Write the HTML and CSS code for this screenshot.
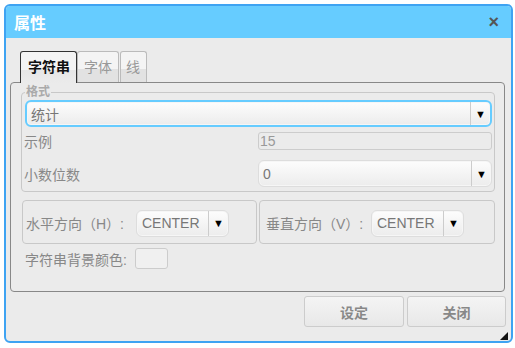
FILE: index.html
```html
<!DOCTYPE html>
<html>
<head>
  <title>属性</title>
  <link rel="stylesheet" href="styles.css">
</head>
<body>
  <div class="dialog">
    <div class="dialog-head">
      <span class="dialog-title">属性</span>
      <span class="dialog-close">×</span>
    </div>

    <div class="dialog-body">
      <div class="tabs">
        <div class="tab active">字符串</div>
        <div class="tab">字体</div>
        <div class="tab">线</div>
      </div>

      <div class="panel">
        <fieldset class="format">
          <legend>格式</legend>
          <div class="select focused">
            <span class="select-text">统计</span>
            <span class="select-arrow">▼</span>
          </div>
          <div class="form-row sample-row">
            <span class="label">示例</span>
            <div class="text-input">15</div>
          </div>
          <div class="form-row digits-row">
            <span class="label">小数位数</span>
            <div class="select">
              <span class="select-text">0</span>
              <span class="select-arrow">▼</span>
            </div>
          </div>
        </fieldset>

        <div class="align-row">
          <div class="align-box left-box">
            <span class="label">水平方向（H）:</span>
            <div class="select small">
              <span class="select-text">CENTER</span>
              <span class="select-arrow">▼</span>
            </div>
          </div>
          <div class="align-box right-box">
            <span class="label">垂直方向（V）:</span>
            <div class="select small">
              <span class="select-text">CENTER</span>
              <span class="select-arrow">▼</span>
            </div>
          </div>
        </div>

        <div class="color-row">
          <span class="label">字符串背景颜色:</span>
          <div class="color-box"></div>
        </div>
      </div>

      <div class="buttons">
        <button class="btn ok">设定</button>
        <button class="btn close">关闭</button>
      </div>
    </div>

    <div class="grip"></div>
  </div>
</body>
</html>
```

FILE: styles.css
```css
:root {
  --head: #66ccff;
  --frame: #3ea3f2;
  --bg: #ebebeb;
  --label: #888;
  --line: #c8c8c8;
}

body {
  margin: 0;
  background: #fff;
  font-family: "Liberation Sans", "Noto Sans CJK SC", sans-serif;
  font-size: 14px;
}

.dialog {
  position: relative;
  box-sizing: border-box;
  width: 509px;
  height: 339px;
  margin: 4px 0 0 4px;
  border: 2px solid var(--frame);
  border-radius: 6px;
  background: var(--bg);
  overflow: hidden;
}

.dialog-head {
  height: 32px;
  background: var(--head);
  display: flex;
  align-items: center;
  justify-content: space-between;
  padding: 0 12px 0 8px;
}

.dialog-title {
  color: #fff;
  font-weight: bold;
  font-size: 16px;
}

.dialog-close {
  color: #555;
  font-weight: bold;
  font-size: 18px;
  line-height: 1;
}

.dialog-body {
  padding: 13px 6px 0 4px;
}

/* Tabs */
.tabs {
  display: flex;
  align-items: flex-end;
  padding-left: 10px;
  height: 31px;
  position: relative;
  z-index: 1;
}

.tab {
  box-sizing: border-box;
  height: 31px;
  line-height: 30px;
  padding: 0 6px;
  margin-right: 1px;
  border: 1px solid #bbb;
  border-bottom: none;
  border-radius: 3px 3px 0 0;
  background: linear-gradient(#f4f4f4 0, #f4f4f4 58%, #e2e2e2 58%, #e2e2e2 100%);
  color: #999;
}

.tab:last-child {
  padding: 0 6px 0 5px;
}

.tab.active {
  height: 32px;
  margin-bottom: -1px;
  margin-right: 0;
  padding: 0 6px 0 7px;
  border-color: #333;
  color: #111;
  font-weight: bold;
  background: linear-gradient(#f4f4f4 0, #f4f4f4 58%, #e6e6e6 58%, #ebebeb 100%);
}

/* Panel */
.panel {
  border: 1px solid #888;
  border-radius: 4px;
  padding: 2px 9px 22px 10px;
}

.format {
  margin: 0;
  padding: 1px 2px 4px 3px;
  border: 1px solid var(--line);
  border-radius: 4px;
}

.format legend {
  padding: 0 1px;
  font-size: 12px;
  line-height: 14px;
  color: #aaa;
  font-weight: bold;
}

.label {
  color: var(--label);
  white-space: nowrap;
}

.select {
  box-sizing: border-box;
  display: flex;
  align-items: stretch;
  height: 27px;
  border: 1px solid #ddd;
  border-radius: 6px;
  background: linear-gradient(#fdfdfd, #ececec);
  box-shadow: inset 0 0 0 1px #f6f6f6;
}

.select.focused {
  border: 2px solid var(--head);
}

.select-text {
  flex: 1;
  display: flex;
  align-items: center;
  padding-left: 4px;
  color: #777;
}

.select-arrow {
  width: 19px;
  display: flex;
  align-items: center;
  justify-content: center;
  border-left: 1px solid #ccc;
  font-size: 11px;
  color: #000;
}

.form-row {
  display: grid;
  grid-template-columns: 233px 1fr;
  align-items: center;
}

.form-row .label {
  margin-left: -1px;
}

.sample-row {
  margin-top: 4px;
}

.digits-row {
  margin-top: 9px;
}

.text-input {
  box-sizing: border-box;
  height: 18px;
  line-height: 16px;
  border: 1px solid #ccc;
  border-radius: 3px;
  padding-left: 1px;
  color: #999;
}

/* Alignment boxes */
.align-row {
  display: grid;
  grid-template-columns: 235px 1fr;
  gap: 2px;
  margin: 8px 0 0 1px;
}

.align-box {
  box-sizing: border-box;
  height: 44px;
  border: 1px solid var(--line);
  border-radius: 4px;
  display: flex;
  align-items: center;
  padding-top: 2px;
}

.left-box {
  padding-left: 3px;
}

.left-box .label {
  width: 110px;
}

.right-box {
  padding-left: 6px;
}

.right-box .label {
  width: 105px;
}

.select.small {
  width: 93px;
  height: 27px;
}

.select.small .select-text {
  padding-left: 5px;
}

.color-row {
  display: flex;
  align-items: center;
  margin: 4px 0 0 4px;
}

.color-row .label {
  width: 110px;
}

.color-box {
  box-sizing: border-box;
  width: 33px;
  height: 21px;
  border: 1px solid #ccc;
  border-radius: 3px;
  background: #f0f0f0;
}

/* Buttons */
.buttons {
  display: flex;
  justify-content: flex-end;
  gap: 3px;
  margin: 4px -1px 0 0;
}

.btn {
  box-sizing: border-box;
  height: 31px;
  border: 1px solid #ccc;
  border-radius: 3px;
  background: linear-gradient(#f4f4f4, #e8e8e8);
  color: #888;
  font-family: inherit;
  font-size: 14px;
  font-weight: bold;
}

.btn.ok {
  width: 100px;
}

.btn.close {
  width: 99px;
}

.grip {
  position: absolute;
  right: 3px;
  bottom: 1px;
  width: 0;
  height: 0;
  border-left: 8px solid transparent;
  border-bottom: 8px solid #111;
}
```
